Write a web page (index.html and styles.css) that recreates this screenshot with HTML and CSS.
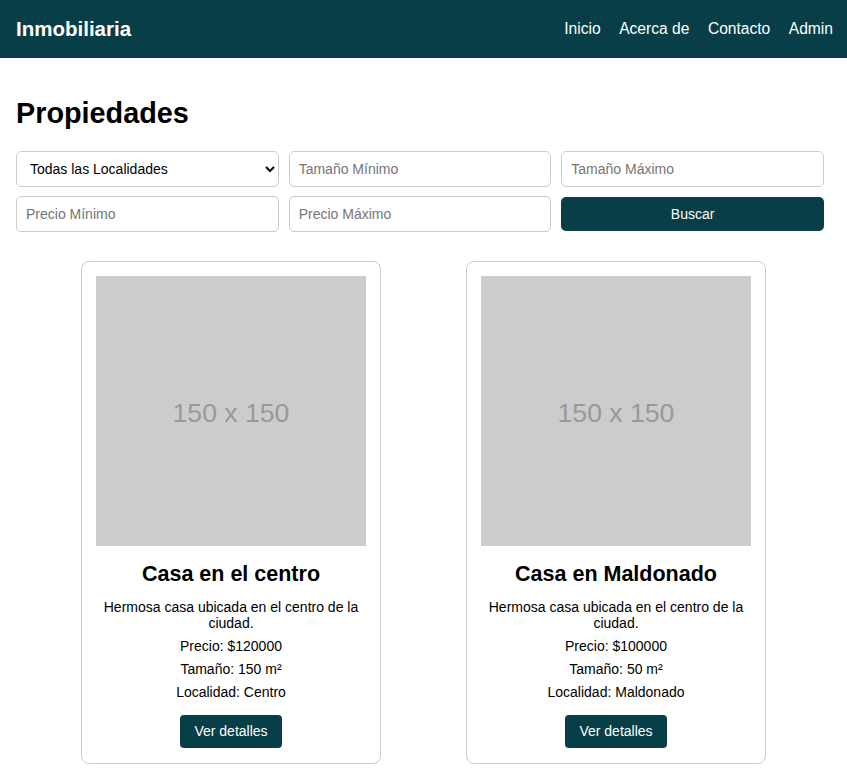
FILE: index.html
```html
<!DOCTYPE html>
<html lang="es">
<head>
<meta charset="utf-8">
<title>Inmobiliaria</title>
<link rel="stylesheet" href="styles.css">
</head>
<body>
<header class="topbar">
  <div class="brand">Inmobiliaria</div>
  <nav class="nav">
    <a href="#">Inicio</a>
    <a href="#">Acerca de</a>
    <a href="#">Contacto</a>
    <a href="#">Admin</a>
  </nav>
</header>
<main class="page">
  <h1 class="title">Propiedades</h1>
  <form class="filters">
    <select class="field select">
      <option>Todas las Localidades</option>
    </select>
    <input class="field" type="text" placeholder="Tamaño Mínimo">
    <input class="field" type="text" placeholder="Tamaño Máximo">
    <input class="field" type="text" placeholder="Precio Mínimo">
    <input class="field" type="text" placeholder="Precio Máximo">
    <button class="search" type="button">Buscar</button>
  </form>
  <section class="cards">
    <article class="card">
      <div class="thumb">150 x 150</div>
      <h2 class="card-title">Casa en el centro</h2>
      <p class="card-text">Hermosa casa ubicada en el centro de la ciudad.</p>
      <p class="card-text">Precio: $120000</p>
      <p class="card-text">Tamaño: 150 m²</p>
      <p class="card-text">Localidad: Centro</p>
      <a class="btn" href="#">Ver detalles</a>
    </article>
    <article class="card">
      <div class="thumb">150 x 150</div>
      <h2 class="card-title">Casa en Maldonado</h2>
      <p class="card-text">Hermosa casa ubicada en el centro de la ciudad.</p>
      <p class="card-text">Precio: $100000</p>
      <p class="card-text">Tamaño: 50 m²</p>
      <p class="card-text">Localidad: Maldonado</p>
      <a class="btn" href="#">Ver detalles</a>
    </article>
  </section>
</main>
</body>
</html>
```

FILE: styles.css
```css
* { box-sizing: border-box; }

html, body {
  margin: 0;
  padding: 0;
}

body {
  font-family: "Liberation Sans", Arial, sans-serif;
  color: #000;
  background: #fff;
}

.topbar {
  height: 58px;
  background: #083e47;
  display: flex;
  align-items: center;
  justify-content: space-between;
  padding: 0 14px 0 16px;
  color: #fff;
}

.brand {
  font-size: 20.5px;
  font-weight: bold;
}

.nav {
  display: flex;
  gap: 18.5px;
}

.nav a {
  color: #fff;
  text-decoration: none;
  font-size: 15.6px;
}

.page {
  padding: 16px;
}

.title {
  font-size: 28.8px;
  font-weight: bold;
  margin: 23px 0 21px;
}

.filters {
  display: grid;
  grid-template-columns: repeat(3, 1fr);
  column-gap: 10px;
  row-gap: 9px;
  margin-right: 7px;
}

.field {
  height: 36px;
  border: 1px solid #ccc;
  border-radius: 5px;
  padding: 0 9px;
  font-family: "Liberation Sans", Arial, sans-serif;
  font-size: 14px;
  color: #000;
  background: #fff;
}

.field::placeholder {
  color: #757575;
}

.select {
  padding: 0 6px 0 9px;
}

.search {
  height: 34px;
  margin-top: 1px;
  border: none;
  border-radius: 5px;
  background: #083e47;
  color: #fff;
  font-family: "Liberation Sans", Arial, sans-serif;
  font-size: 14px;
}

.cards {
  display: flex;
  justify-content: space-evenly;
  margin-top: 29px;
}

.card {
  width: 300px;
  margin: 0 20px;
  border: 1px solid #ccc;
  border-radius: 8px;
  padding: 14px 14px 15px;
  text-align: center;
}

.thumb {
  width: 270px;
  height: 270px;
  padding-top: 4px;
  background: #cccccc;
  color: #999999;
  font-size: 26.6px;
  display: flex;
  align-items: center;
  justify-content: center;
}

.card-title {
  font-size: 21.5px;
  font-weight: bold;
  margin: 16px 0 12px;
}

.card-text {
  font-size: 14px;
  line-height: 16px;
  margin: 7px 0;
}

.btn {
  display: inline-block;
  margin-top: 8px;
  padding: 8px 14px;
  line-height: 17px;
  font-size: 14px;
  color: #fff;
  background: #083e47;
  border-radius: 4px;
  text-decoration: none;
}
```
